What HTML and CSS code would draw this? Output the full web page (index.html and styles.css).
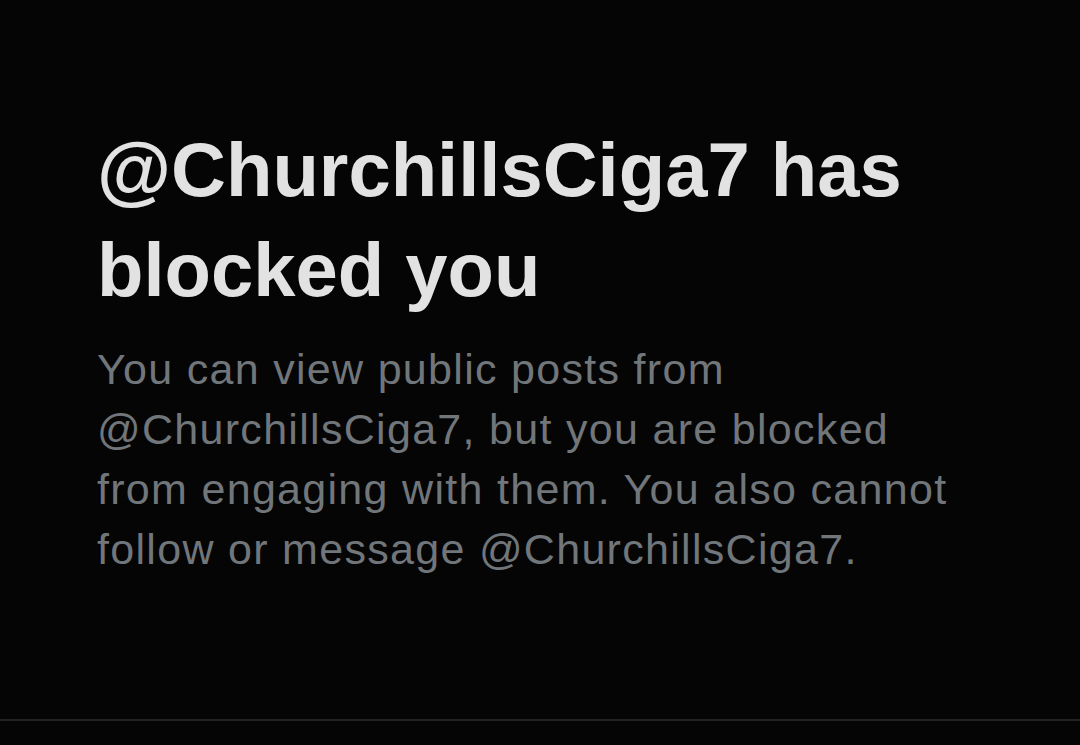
FILE: index.html
```html
<!DOCTYPE html>
<html>
<head>
<meta charset="utf-8">
<link rel="stylesheet" href="styles.css">
</head>
<body>
<main class="page">
  <section class="blocked">
    <h1 class="title">@ChurchillsCiga7 has blocked you</h1>
    <p class="desc">You can view public posts from @ChurchillsCiga7, but you are blocked from engaging with them. You also cannot follow or message @ChurchillsCiga7.</p>
  </section>
  <div class="divider"></div>
</main>
</body>
</html>
```
FILE: styles.css
```css
html, body {
  margin: 0;
  padding: 0;
  background: #050505;
}
.page {
  width: 1080px;
  height: 745px;
  display: flex;
  flex-direction: column;
  overflow: hidden;
}
.blocked {
  padding: 120px 60px 0 97px;
  height: 598px;
  box-sizing: border-box;
}
.title {
  margin: 0;
  font-family: "Liberation Sans", Arial, sans-serif;
  font-weight: 700;
  font-size: 76px;
  line-height: 100px;
  color: #e2e2e2;
  width: 880px;
}
.desc {
  margin: 19px 0 0 0;
  font-family: "Liberation Sans", Arial, sans-serif;
  font-size: 43px;
  line-height: 60px;
  letter-spacing: 1.3px;
  color: #71767b;
  width: 870px;
}
.divider {
  height: 2px;
  background: #222222;
  margin-top: 121px;
}
```
